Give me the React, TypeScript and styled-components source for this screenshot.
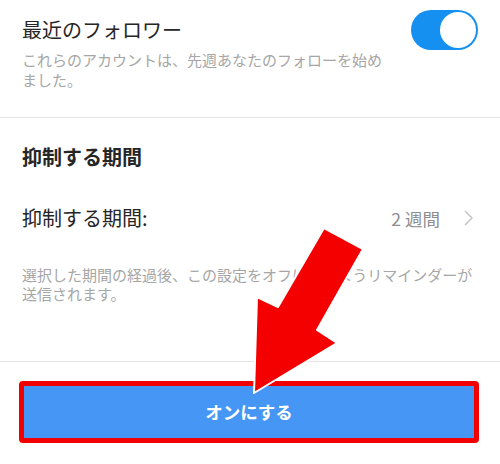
import React from 'react';
import styled, { createGlobalStyle } from 'styled-components';

const GlobalStyle = createGlobalStyle`
	html, body {
		margin: 0;
		padding: 0;
		background: #ffffff;
	}
	body {
		font-family: "Noto Sans CJK JP", "Noto Sans", sans-serif;
		color: #262626;
	}
`;

const Page = styled.div`
	position: relative;
	width: 500px;
	height: 464px;
	overflow: hidden;
	background: #ffffff;
`;

const ToggleSection = styled.section`
	display: flex;
	justify-content: space-between;
	align-items: flex-start;
	padding: 10px 22px 27px 22px;
	border-bottom: 1px solid #e4e4e4;
`;

const TextColumn = styled.div`
	padding-top: 8px;
	display: flex;
	flex-direction: column;
	gap: 8px;
`;

const Title = styled.div`
	font-size: 20px;
	line-height: 24px;
	color: #262626;
`;

const Hint = styled.p<{ $width?: number }>`
	margin: 0;
	font-size: 15px;
	line-height: ${({ $width }) => ($width ? '20px' : '19px')};
	color: #a6a6a6;
	width: ${({ $width }) => ($width ? `${$width}px` : 'auto')};
`;

const Toggle = styled.div`
	position: relative;
	width: 67px;
	height: 40px;
	border-radius: 20px;
	background: #1590f0;
	flex-shrink: 0;

	&::after {
		content: '';
		position: absolute;
		top: 2px;
		right: 2px;
		width: 36px;
		height: 36px;
		border-radius: 50%;
		background: #ffffff;
	}
`;

const PeriodSection = styled.section`
	padding: 27px 22px 58px 22px;
	border-bottom: 1px solid #e4e4e4;
`;

const Heading = styled.h3`
	margin: 0;
	font-size: 20px;
	line-height: 24px;
	font-weight: 700;
	color: #262626;
`;

const SettingRow = styled.div`
	display: flex;
	align-items: center;
	justify-content: space-between;
	margin: 37px 0 35px 0;
	height: 24px;
`;

const RowLabel = styled.span`
	font-size: 20px;
	line-height: 24px;
	color: #262626;
`;

const RowValue = styled.span`
	display: flex;
	align-items: center;
	gap: 24px;
	font-size: 17.5px;
	color: #8e8e8e;
	padding-right: 5px;
`;

const ButtonArea = styled.div`
	padding: 19px 21px 0 19px;
`;

const ActionButton = styled.button`
	display: flex;
	align-items: center;
	justify-content: center;
	width: 460px;
	height: 62px;
	border: 5px solid #f20000;
	border-radius: 4px;
	background: #4596f5;
	color: #ffffff;
	font-family: "Noto Sans CJK JP", sans-serif;
	font-size: 17.5px;
	font-weight: 700;
	padding: 0 0 2px 0;
	box-sizing: border-box;
`;

const ArrowOverlay = styled.svg`
	position: absolute;
	top: 0;
	left: 0;
	pointer-events: none;
`;

const Chevron = () => (
	<svg width="9" height="16" viewBox="0 0 9 16">
		<path d="M1 1 L8 8 L1 15" fill="none" stroke="#c4c4c4" strokeWidth="1.5" />
	</svg>
);

const App = function () {
	return (
		<Page>
			<GlobalStyle />
			<ToggleSection>
				<TextColumn>
					<Title>最近のフォロワー</Title>
					<Hint $width={365}>これらのアカウントは、先週あなたのフォローを始めました。</Hint>
				</TextColumn>
				<Toggle />
			</ToggleSection>
			<PeriodSection>
				<Heading>抑制する期間</Heading>
				<SettingRow>
					<RowLabel>抑制する期間:</RowLabel>
					<RowValue>
						2 週間
						<Chevron />
					</RowValue>
				</SettingRow>
				<Hint>選択した期間の経過後、この設定をオフにするようリマインダーが送信されます。</Hint>
			</PeriodSection>
			<ButtonArea>
				<ActionButton>オンにする</ActionButton>
			</ButtonArea>
			<ArrowOverlay width="500" height="464" viewBox="0 0 500 464">
				<polygon
					points="324,228 363,249 317,330 337,343 254,393 257,297 278,307"
					fill="#f50000"
					stroke="#ffffff"
					strokeWidth="2"
					strokeLinejoin="round"
				/>
			</ArrowOverlay>
		</Page>
	);
};

export default App;
